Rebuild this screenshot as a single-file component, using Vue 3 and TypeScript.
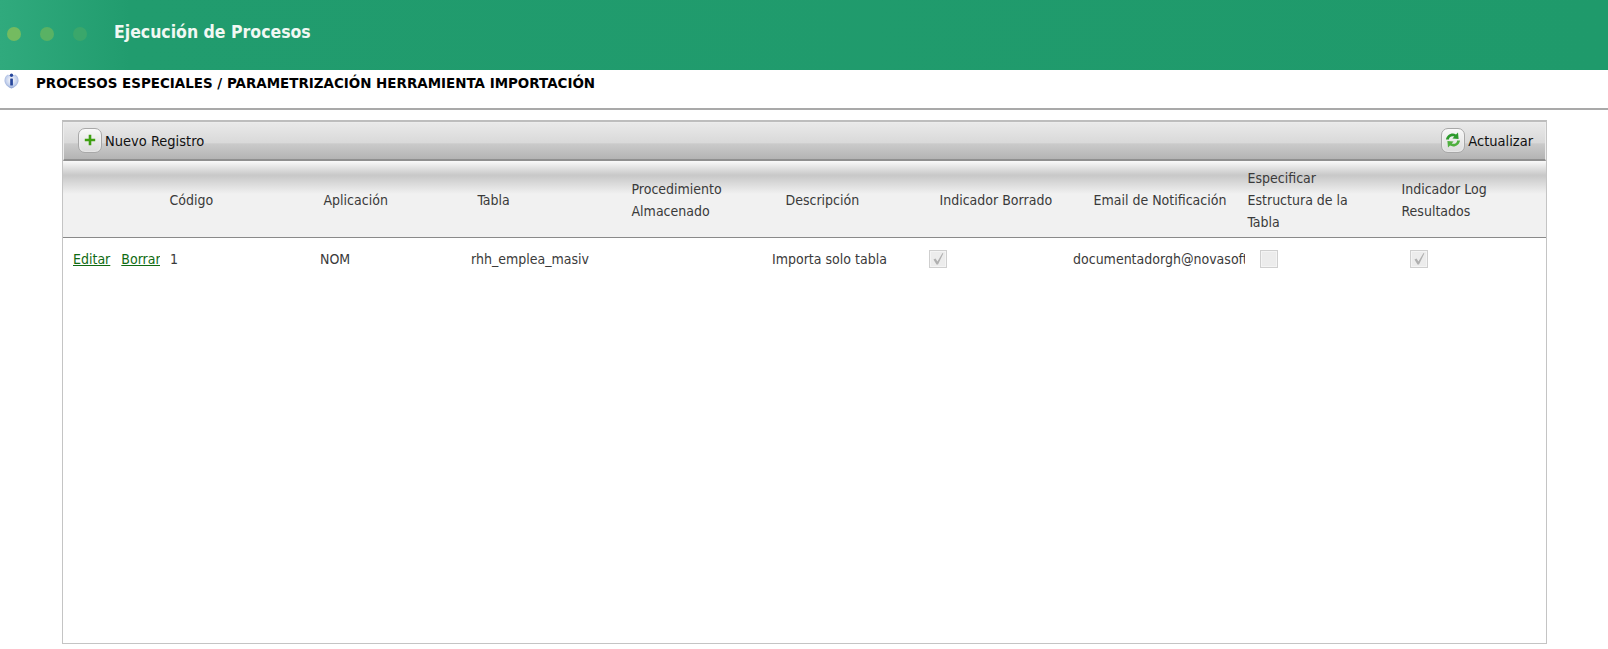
<script setup lang="ts">
interface Head { lines: string[] }
const heads: Head[] = [
  { lines: ['Código'] },
  { lines: ['Aplicación'] },
  { lines: ['Tabla'] },
  { lines: ['Procedimiento', 'Almacenado'] },
  { lines: ['Descripción'] },
  { lines: ['Indicador Borrado'] },
  { lines: ['Email de Notificación'] },
  { lines: ['Especificar', 'Estructura de la', 'Tabla'] },
  { lines: ['Indicador Log', 'Resultados'] },
]
</script>

<template>
  <div class="page">
    <header class="banner">
      <div class="dots">
        <span class="dot d1"></span>
        <span class="dot d2"></span>
        <span class="dot d3"></span>
      </div>
      <h1 class="title">Ejecución de Procesos</h1>
    </header>

    <div class="crumb">
      <svg class="info" width="17" height="18" viewBox="0 0 17 18">
        <defs>
          <radialGradient id="ig" cx="50%" cy="40%" r="62%">
            <stop offset="0" stop-color="#ffffff" />
            <stop offset="0.65" stop-color="#c3d0ec" />
            <stop offset="1" stop-color="#7c95cc" />
          </radialGradient>
        </defs>
        <path d="M8.5 16.5C5.5 15.5 1.5 12.5 1.5 8.5 1.5 5.5 3 3.5 5 2.5 6 4 11 4 12 2.5 14 3.5 15.5 5.5 15.5 8.5 15.5 12.5 11.5 15.5 8.5 16.5Z" fill="url(#ig)" />
        <rect x="7.2" y="6.5" width="2.7" height="7" rx="0.5" fill="#27479c" />
        <circle cx="8.5" cy="3.2" r="1.7" fill="#27479c" />
      </svg>
      <span class="crumb-text">PROCESOS ESPECIALES / PARAMETRIZACIÓN HERRAMIENTA IMPORTACIÓN</span>
    </div>

    <section class="panel">
      <div class="toolbar">
        <button class="tool" type="button">
          <span class="tool-icon">
            <svg width="14" height="14" viewBox="0 0 14 14">
              <path d="M5.7 1.8h2.6v3.9h3.9v2.6H8.3v3.9H5.7V8.3H1.8V5.7h3.9z" fill="#3f9f12" />
            </svg>
          </span>
          <span class="tool-label">Nuevo Registro</span>
        </button>
        <button class="tool" type="button">
          <span class="tool-icon">
            <svg width="18" height="18" viewBox="0 0 18 18">
              <path d="M2 8.6C2.4 4.2 7.6 1 12 3.4L14 1.6l.6 6.4-6.2-.6 1.9-1.9C7.4 4.4 5 6 4.9 8.6z" fill="#2c9a2c" />
              <path d="M16 9.4c-.4 4.4-5.6 7.6-10 5.2L4 16.4 3.4 10l6.2.6-1.9 1.9c2.9 1.1 5.3-.5 5.4-3.1z" fill="#4fb03e" />
            </svg>
          </span>
          <span class="tool-label">Actualizar</span>
        </button>
      </div>

      <div class="thead">
        <div class="thead-spacer"></div>
        <div v-for="h in heads" :key="h.lines[0]" class="th">
          <span v-for="l in h.lines" :key="l" class="th-line">{{ l }}</span>
        </div>
      </div>

      <div class="row">
        <div class="actions">
          <a class="lnk" href="#">Editar</a>
          <a class="lnk clip" href="#">Borrar</a>
        </div>
        <div class="td">1</div>
        <div class="td">NOM</div>
        <div class="td">rhh_emplea_masiv</div>
        <div class="td"></div>
        <div class="td">Importa solo tabla</div>
        <div class="chk"><span class="box"><svg width="14" height="14" viewBox="0 0 14 14"><path d="M2.5 7.5l2-1 2 3L11.5 1l.8.5L7 12.5H5.5z" fill="#b0b0b0" /></svg></span></div>
        <div class="td email">documentadorgh@novasoft.com.co</div>
        <div class="chk"><span class="box"></span></div>
        <div class="chk"><span class="box"><svg width="14" height="14" viewBox="0 0 14 14"><path d="M2.5 7.5l2-1 2 3L11.5 1l.8.5L7 12.5H5.5z" fill="#b0b0b0" /></svg></span></div>
      </div>
    </section>
  </div>
</template>

<style scoped>
.page {
  width: 1608px;
  height: 649px;
  overflow: hidden;
  background: #fff;
  font-family: "DejaVu Sans", sans-serif;
  font-stretch: condensed;
  font-size: 14px;
  color: #333;
}
.banner {
  height: 70px;
  display: flex;
  align-items: center;
  padding-left: 7px;
  padding-bottom: 7px;
  box-sizing: border-box;
  background: linear-gradient(90deg, #30aa7d 0, #219c6e 130px, #1f9a6b 100%);
}
.dots {
  display: flex;
  gap: 19px;
  width: 107px;
  margin-top: 5px;
}
.dot {
  width: 14px;
  height: 14px;
  border-radius: 50%;
}
.d1 { background: #74bb60; }
.d2 { background: #59b264; }
.d3 { background: #3aa76b; }
.title {
  margin: 0;
  font-size: 17.5px;
  font-weight: 700;
  color: #f1f8f3;
}
.crumb {
  height: 38px;
  display: flex;
  align-items: flex-start;
  border-bottom: 2px solid #a9a9a9;
  margin-bottom: 10px;
}
.info {
  margin: 2px 0 0 3px;
}
.crumb-text {
  margin: 6px 0 0 16px;
  font-weight: 700;
  font-stretch: normal;
  font-size: 13.45px;
  color: #000;
}
.panel {
  margin-left: 62px;
  width: 1485px;
  height: 524px;
  box-sizing: border-box;
  border: 1px solid #c4c4c4;
  border-top: 2px solid #bdbdbd;
}
.toolbar {
  height: 39px;
  box-sizing: border-box;
  display: flex;
  justify-content: space-between;
  align-items: center;
  padding: 0 12px 2px 14px;
  border: 1px solid #ececec;
  border-bottom: 2px solid #8f8f8f;
  background: linear-gradient(180deg, #e9e9e9 0, #d9d9d9 55%, #cacaca 58%, #b4b4b4 100%);
}
.tool {
  display: flex;
  align-items: center;
  gap: 3px;
  border: 0;
  padding: 0;
  background: none;
  font: inherit;
  font-size: 14.5px;
  color: #111;
}
.tool-label {
  margin-top: 2px;
}
.tool-icon {
  width: 22px;
  height: 23px;
  display: flex;
  align-items: center;
  justify-content: center;
  border: 1px solid #a8a8a8;
  border-radius: 7px;
  background: linear-gradient(180deg, #f8f8f8, #dcdcdc);
  box-shadow: inset 0 0 2px #fff;
}
.thead {
  height: 77px;
  box-sizing: border-box;
  display: grid;
  grid-template-columns: 98.5px repeat(9, 154px);
  align-items: center;
  padding-top: 2px;
  border-bottom: 1px solid #8a8a8a;
  background: linear-gradient(180deg, #fafafa 0, #c9c9c9 14px, #c9c9c9 15px, #f1f1f1 33px, #f1f1f1 100%);
}
.th {
  padding-left: 8px;
  display: flex;
  flex-direction: column;
  line-height: 22px;
  font-size: 14px;
  color: #3a3a3a;
}
.th-line {
  white-space: nowrap;
}
.row {
  display: grid;
  grid-template-columns: 107px 150px 151px 150px 151px 151px 150px 181px 150px 1fr;
  align-items: center;
  height: 42px;
}
.actions {
  display: flex;
  gap: 11px;
  padding-left: 10px;
}
.lnk {
  color: #0f6b12;
  text-decoration: underline;
  font-size: 14px;
}
.clip {
  width: 39px;
  overflow: hidden;
  white-space: nowrap;
}
.td {
  white-space: nowrap;
  overflow: hidden;
  font-size: 14px;
  color: #3a3a3a;
}
.email {
  width: 172px;
}
.chk {
  padding-left: 6px;
  display: flex;
}
.box {
  width: 18px;
  height: 18px;
  box-sizing: border-box;
  display: flex;
  align-items: center;
  justify-content: center;
  border: 1px solid #cfcfcf;
  background: #ececec;
  box-shadow: inset 0 0 0 1px #f4f4f4;
  margin-top: -1px;
}
</style>
